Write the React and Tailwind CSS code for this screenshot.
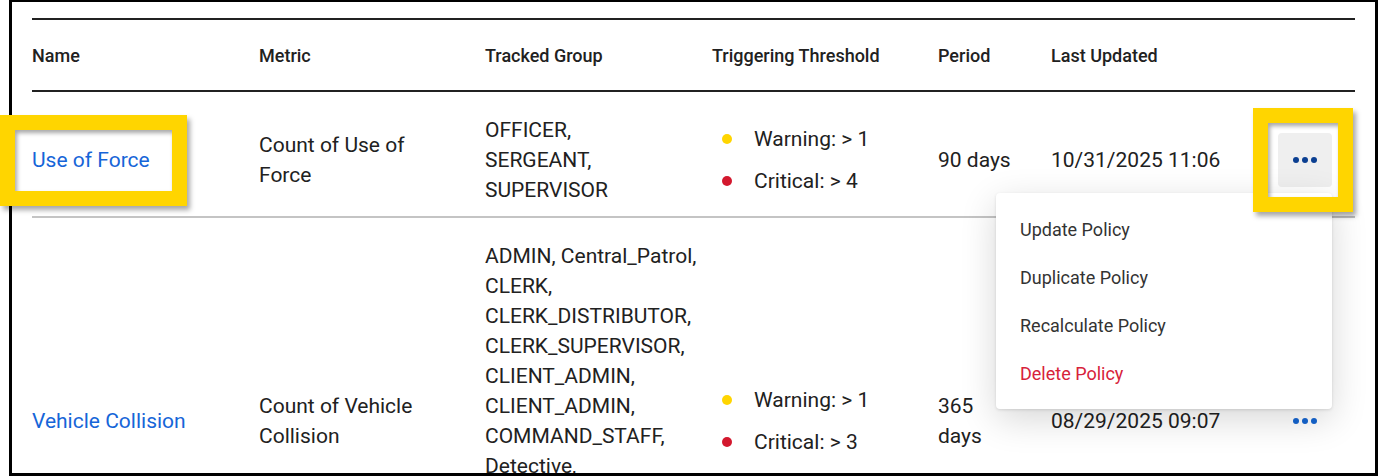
const rows = [
  {
    name: 'Use of Force',
    metric: 'Count of Use of Force',
    groups: ['OFFICER,', 'SERGEANT,', 'SUPERVISOR'],
    warning: '> 1',
    critical: '> 4',
    period: '90 days',
    updated: '10/31/2025 11:06',
    active: true,
  },
  {
    name: 'Vehicle Collision',
    metric: 'Count of Vehicle Collision',
    groups: [
      'ADMIN, Central_Patrol,',
      'CLERK,',
      'CLERK_DISTRIBUTOR,',
      'CLERK_SUPERVISOR,',
      'CLIENT_ADMIN,',
      'CLIENT_ADMIN,',
      'COMMAND_STAFF,',
      'Detective,',
      'INTERNAL_AFFAIRS,',
      'OFFICER,',
      'SERGEANT,',
      'SUPERVISOR',
    ],
    warning: '> 1',
    critical: '> 3',
    period: '365 days',
    updated: '08/29/2025 09:07',
    active: false,
  },
]

const cols = 'grid grid-cols-[227px_226px_227px_226px_113px_227px_77px]'

function Dots({ color }) {
  return (
    <svg width="24" height="6" viewBox="0 0 24 6" fill={color}>
      <circle cx="3" cy="3" r="3" />
      <circle cx="12" cy="3" r="3" />
      <circle cx="21" cy="3" r="3" />
    </svg>
  )
}

function Row({ row }) {
  return (
    <div className={`${cols} items-center border-b-2 border-[#c4c4c4] pt-[23px] pb-[11px] text-[21px] leading-[30px]`}>
      <div className="pr-8">
        <a className="text-[#1665d8]">{row.name}</a>
      </div>
      <div className="pr-10">{row.metric}</div>
      <div className="whitespace-nowrap">
        {row.groups.map((g, i) => (
          <div key={i}>{g}</div>
        ))}
      </div>
      <div className="flex flex-col gap-3 pl-[10px]">
        <div className="flex items-center gap-[22px]">
          <span className="w-[10px] h-[10px] rounded-full bg-[#ffd500]" />
          <span>Warning: {row.warning}</span>
        </div>
        <div className="flex items-center gap-[22px]">
          <span className="w-[10px] h-[10px] rounded-full bg-[#d3182e]" />
          <span>Critical: {row.critical}</span>
        </div>
      </div>
      <div className="pr-[34px]">{row.period}</div>
      <div>{row.updated}</div>
      <div>
        <button
          className={`w-[54px] h-[54px] rounded flex items-center justify-center ${row.active ? 'bg-[#efefef]' : ''}`}
        >
          <Dots color={row.active ? '#0b3f91' : '#1565d0'} />
        </button>
      </div>
    </div>
  )
}

export default function App() {
  return (
    <div className="relative w-[1379px] h-[476px] overflow-hidden bg-white font-['Roboto',sans-serif] text-[#212121]">
      <div className="ml-[9px] w-[1369px] h-[476px] border-[3px] border-t-2 border-black px-5 pt-4 overflow-hidden">
        <div className="border-t-2 border-[#212121]">
          {/* Header */}
          <div className={`${cols} h-[72px] items-center border-b-2 border-[#212121] text-[18px] font-medium`}>
            <div>Name</div>
            <div>Metric</div>
            <div>Tracked Group</div>
            <div>Triggering Threshold</div>
            <div>Period</div>
            <div>Last Updated</div>
            <div />
          </div>

          {rows.map((row) => (
            <Row key={row.name} row={row} />
          ))}
        </div>
      </div>

      {/* Actions menu */}
      <div className="absolute left-[996px] top-[193px] w-[336px] py-3 rounded bg-white shadow-[0_10px_36px_rgba(0,0,0,0.16),0_1px_3px_rgba(0,0,0,0.12)] text-[18px] text-[#333]">
        <div className="h-12 px-6 flex items-center">Update Policy</div>
        <div className="h-12 px-6 flex items-center">Duplicate Policy</div>
        <div className="h-12 px-6 flex items-center">Recalculate Policy</div>
        <div className="h-12 px-6 flex items-center text-[#d7223a]">Delete Policy</div>
      </div>

      {/* Highlight boxes */}
      <div className="absolute left-0 top-[115px] w-[187px] h-[91px] border-[15px] border-[#ffd500] shadow-[3px_4px_5px_rgba(0,0,0,0.35),inset_2px_3px_4px_rgba(0,0,0,0.35)]" />
      <div className="absolute left-[1253px] top-[108px] w-[100px] h-[104px] border-[15px] border-[#ffd500] shadow-[3px_4px_5px_rgba(0,0,0,0.35),inset_2px_3px_4px_rgba(0,0,0,0.35)]" />
    </div>
  )
}
